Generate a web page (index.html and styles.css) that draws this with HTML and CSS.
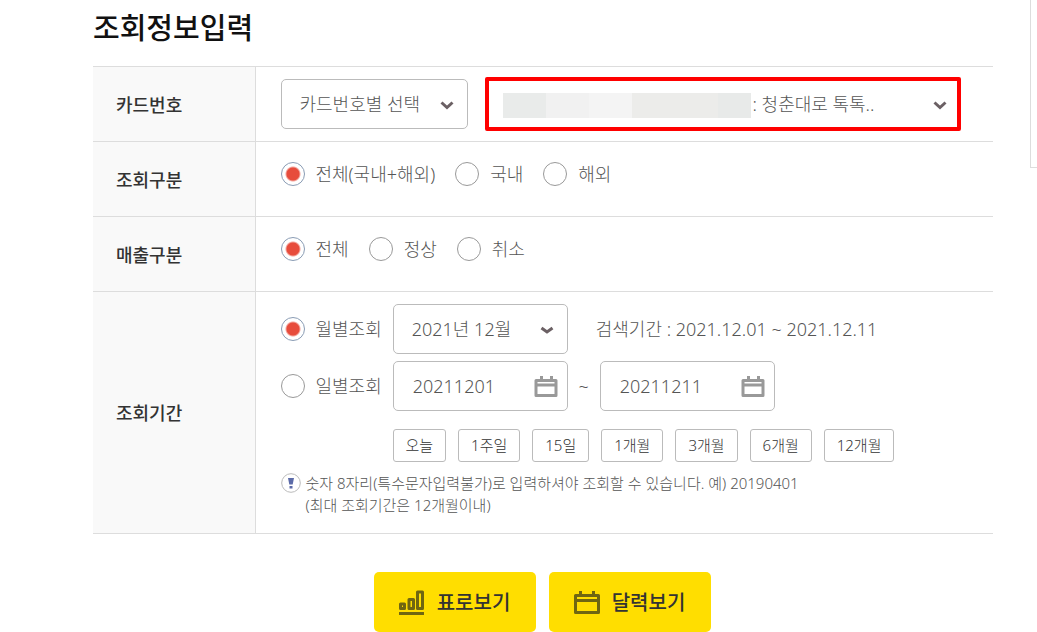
FILE: index.html
```html
<!DOCTYPE html>
<html lang="ko">
<head>
<meta charset="utf-8">
<meta name="viewport" content="width=device-width, initial-scale=1">
<title>조회정보입력</title>
<link rel="stylesheet" href="styles.css">
</head>
<body>
<div class="page">
  <main class="content">
    <h1 class="title">조회정보입력</h1>
    <form>
      <table class="form-table">
        <tbody>
          <tr>
            <th scope="row">카드번호</th>
            <td class="cell-card">
              <div class="line card-line">
                <div class="field field-kind">
                  <select class="control" aria-label="카드번호 선택 방식"><option>카드번호별 선택</option></select>
                  <svg class="chevron" viewBox="0 0 14 9" aria-hidden="true"><path d="M1.500 1.500 7 6.500 12.500 1.500"/></svg>
                </div>
                <div class="field field-card">
                  <select class="control" aria-label="카드번호"><option>: 청춘대로 톡톡..</option></select>
                  <span class="mask" aria-hidden="true"></span>
                  <svg class="chevron" viewBox="0 0 14 9" aria-hidden="true"><path d="M1.500 1.500 7 6.500 12.500 1.500"/></svg>
                </div>
              </div>
            </td>
          </tr>
          <tr>
            <th scope="row">조회구분</th>
            <td class="cell-radio">
              <div class="line radios">
                <label class="radio"><input type="radio" name="region" checked>전체(국내+해외)</label>
                <label class="radio"><input type="radio" name="region">국내</label>
                <label class="radio"><input type="radio" name="region">해외</label>
              </div>
            </td>
          </tr>
          <tr>
            <th scope="row">매출구분</th>
            <td class="cell-radio">
              <div class="line radios">
                <label class="radio"><input type="radio" name="sales" checked>전체</label>
                <label class="radio"><input type="radio" name="sales">정상</label>
                <label class="radio"><input type="radio" name="sales">취소</label>
              </div>
            </td>
          </tr>
          <tr>
            <th scope="row">조회기간</th>
            <td class="cell-period">
              <div class="line period-line">
                <label class="radio period-label"><input type="radio" name="period" checked>월별조회</label>
                <div class="field field-date">
                  <select class="control" aria-label="조회 월"><option>2021년 12월</option></select>
                  <svg class="chevron" viewBox="0 0 14 9" aria-hidden="true"><path d="M1.500 2 7 6 12.500 2"/></svg>
                </div>
                <p class="range">검색기간 : 2021.12.01 ~ 2021.12.11</p>
              </div>
              <div class="line period-line">
                <label class="radio period-label"><input type="radio" name="period">일별조회</label>
                <div class="field field-date">
                  <input class="control" type="text" value="20211201" aria-label="시작일">
                  <button class="cal-button" type="button" aria-label="시작일 달력"><svg class="calendar" viewBox="0 0 24 22" aria-hidden="true"><path d="M2 4.500h20v15H2zM2 9h20M7.500 0v4M17.500 0v4"/></svg></button>
                </div>
                <span class="tilde">~</span>
                <div class="field field-date">
                  <input class="control" type="text" value="20211211" aria-label="종료일">
                  <button class="cal-button" type="button" aria-label="종료일 달력"><svg class="calendar" viewBox="0 0 24 22" aria-hidden="true"><path d="M2 4.500h20v15H2zM2 9h20M7.500 0v4M17.500 0v4"/></svg></button>
                </div>
              </div>
              <div class="presets">
                <button type="button">오늘</button>
                <button type="button">1주일</button>
                <button type="button">15일</button>
                <button type="button">1개월</button>
                <button type="button">3개월</button>
                <button type="button">6개월</button>
                <button type="button">12개월</button>
              </div>
              <div class="note">
                <svg class="note-icon" viewBox="0 0 20 20" aria-hidden="true"><circle cx="10" cy="10" r="9.300"/><path d="M7 5h6l-1.300 6.500H8.300zM8.500 13h3v2.500h-3z"/></svg>
                <p>숫자 8자리(특수문자입력불가)로 입력하셔야 조회할 수 있습니다. 예) 20190401<br>(최대 조회기간은 12개월이내)</p>
              </div>
            </td>
          </tr>
        </tbody>
      </table>
      <div class="actions">
        <button class="action" type="submit">
          <svg viewBox="0 0 26 26" aria-hidden="true"><path d="M1.500 14h4v4.500h-4zM10 9.500h4.500v9H10zM18.500 2h5v16.500h-5zM0 23.500h25"/></svg>
          표로보기
        </button>
        <button class="action" type="button">
          <svg viewBox="0 0 26 26" aria-hidden="true"><path d="M1.500 5.500h23v17h-23zM1.500 10.500h23M6.500 1v4M19.500 1v4"/></svg>
          달력보기
        </button>
      </div>
    </form>
  </main>
  <aside class="side" aria-label="빠른 메뉴"></aside>
</div>
</body>
</html>
```
FILE: styles.css
```css
* { box-sizing: border-box; }
body {
  margin: 0;
  background: #fff;
  color: #555;
  font: 300 18px/24px "Noto Sans", "Noto Sans CJK KR", sans-serif;
}
p { margin: 0; }
button, input, select { font: inherit; color: inherit; }
.page {
  display: grid;
  grid-template-columns: minmax(0, 1fr) 7px;
  column-gap: 37px;
  padding-left: 93px;
}
.side {
  height: 168px;
  border: solid #ddd;
  border-width: 0 0 1px 1px;
}
.title {
  margin: 0;
  padding: 6px 0 20px;
  color: #111;
  font: 500 29px/40px "Noto Sans CJK KR", sans-serif;
}
.form-table {
  width: 100%;
  border-collapse: collapse;
}
.form-table tr {
  border: solid #ddd;
  border-width: 1px 0;
}
.form-table th {
  width: 162px;
  padding: 1px 23px 0;
  border-right: 1px solid #ddd;
  background: #f9f9f9;
  color: #333;
  font-weight: 500;
  text-align: left;
}
.form-table td { padding: 0 0 0 25px; vertical-align: top; }
.form-table .cell-card { padding-top: 10px; padding-bottom: 10px; }
.form-table .cell-radio { padding-top: 20px; padding-bottom: 30px; }
.form-table .cell-period { padding-top: 12px; padding-bottom: 17px; }
.line { display: flex; align-items: center; }
.card-line { gap: 17px; }
.radios { gap: 20px; }
.radio { display: flex; align-items: center; gap: 11px; white-space: nowrap; }
.radio input {
  appearance: none;
  flex: none;
  width: 24px;
  height: 24px;
  margin: 0;
  border: 1px solid #999;
  border-radius: 50%;
  background: #fff;
}
.radio input:checked {
  border-color: #8a9cb4;
  background: radial-gradient(circle, #e74c3c 6px, #fff 8px);
}
.field { display: grid; align-items: center; }
.field > * { grid-area: 1 / 1; }
.control {
  appearance: none;
  width: 100%;
  height: 50px;
  padding: 0 18px;
  border: 1px solid #bbb;
  border-radius: 5px;
  background: #fff;
}
input.control { padding-left: 19px; }
.chevron {
  justify-self: end;
  width: 14px;
  height: 9px;
  margin: 2px 14px 0 0;
  fill: none;
  stroke: #6b6064;
  stroke-width: 3;
  pointer-events: none;
}
.field-kind { width: 187px; }
.field-card { width: 476px; }
.field-card .control {
  height: 54px;
  padding-left: 264px;
  border: 4px solid #f00;
  border-radius: 2px;
}
.mask {
  width: 248px;
  height: 25px;
  margin: 2px 0 0 18px;
  background: linear-gradient(90deg, #e9ebea 0 43px, #f1f1f1 43px 86px, #f4f4f4 86px 129px, #ececea 129px 215px, #e8eae9 215px);
  pointer-events: none;
}
.period-line + .period-line { margin-top: 7px; }
.period-label { margin-right: 11px; }
.field-date { width: 175px; }
.range { margin-left: 28px; }
.tilde { width: 32px; text-align: center; }
.cal-button {
  justify-self: end;
  display: flex;
  margin: 2px 10px 0 0;
  padding: 0;
  border: 0;
  background: none;
}
.calendar { width: 24px; height: 22px; fill: none; stroke: #999; stroke-width: 3; stroke-linejoin: round; }
.presets { display: flex; gap: 12px; margin: 18px 0 10px 112px; }
.presets button {
  height: 33px;
  padding: 0 12px 2px;
  border: 1px solid #bbb;
  border-radius: 3px;
  background: #fff;
  color: #333;
  font-size: 15px;
  line-height: 22px;
}
.note { display: flex; gap: 5px; font-size: 15px; line-height: 22px; }
.note-icon { flex: none; width: 20px; height: 20px; margin-top: 1px; }
.note-icon circle { fill: #fff; stroke: #bbb; }
.note-icon path { fill: #5c6ba8; }
.actions { display: flex; justify-content: center; gap: 13px; padding: 38px 2px 0 0; }
.action {
  display: flex;
  align-items: center;
  justify-content: center;
  gap: 12px;
  width: 162px;
  height: 60px;
  padding: 2px 0 0;
  border: 0;
  border-radius: 5px;
  background: #ffde00;
  color: #333;
  font-size: 20px;
  font-weight: 500;
}
.action svg { width: 26px; height: 26px; fill: none; stroke: #6f6612; stroke-width: 3; stroke-linejoin: round; }
```
